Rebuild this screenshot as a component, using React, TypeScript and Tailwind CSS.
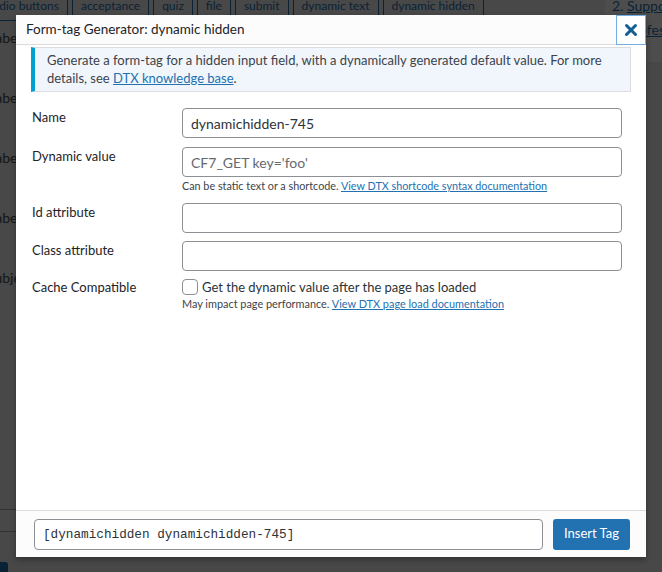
import { X } from "lucide-react";

const tags = ["radio buttons", "acceptance", "quiz", "file", "submit", "dynamic text", "dynamic hidden"];

function Background() {
  return (
    <div className="absolute inset-0 overflow-hidden bg-[#484848]">
      {/* tag button bar */}
      <div className="flex items-start h-[62px]">
        <div className="flex gap-[4px] -ml-[20px] -mt-[6px]">
          {tags.map((t) => (
            <div
              key={t}
              className="h-[27px] px-[8px] border border-[#0a2235] text-[12px] leading-[22px] text-[#0a2235] whitespace-nowrap"
            >
              {t}
            </div>
          ))}
        </div>
        <div className="ml-auto w-[57px] h-[62px] bg-[#4d4d4d] pl-[7px] text-[14px] leading-[24px] text-[#0a2235] whitespace-nowrap overflow-hidden">
          <div className="-mt-[6px]">
            2. <span className="underline">Support</span>
          </div>
          <div className="pl-[14px] underline">Professional</div>
        </div>
      </div>
      {/* left column labels */}
      <div className="flex flex-col gap-[42px] -ml-[12px] -mt-[33px] text-[14px] leading-[18px] text-[#141618]">
        <div>Label</div>
        <div>Label</div>
        <div>Label</div>
        <div>Label</div>
        <div className="-ml-[1px]">Subject</div>
      </div>
      <div className="mt-[222px] w-[16px] border-t border-[#333333]" />
      <div className="mt-[21px] w-[16px] border-t border-[#333333]" />
      <div className="mt-[30px] w-[8px] h-[12px] rounded-tr-[3px] bg-[#0a2235]" />
    </div>
  );
}

function Row({ label, children }: { label: string; children: React.ReactNode }) {
  return (
    <div className="flex">
      <div className="w-[150px] shrink-0 text-[13px] leading-[18px] text-[#1d2327]">{label}</div>
      <div className="flex-1">{children}</div>
    </div>
  );
}

const inputCls =
  "block w-full h-[30px] px-[8px] border border-[#8c8f94] rounded-[4px] bg-white text-[14px] text-[#2c3338] outline-none";

export default function App() {
  return (
    <div
      className="relative w-[662px] h-[572px] overflow-hidden"
      style={{ fontFamily: 'Lato, "Noto Sans", sans-serif' }}
    >
      <Background />

      {/* modal */}
      <div className="absolute left-[16px] top-[15px] w-[630px] h-[542px] bg-white shadow-[0_3px_6px_rgba(0,0,0,0.3)] flex flex-col">
        <div className="relative h-[30px] shrink-0 border-b border-[#dcdcde] bg-[#fcfcfc] pl-[10px] flex items-center">
          <h1 className="text-[13.5px] text-[#1d2327]">Form-tag Generator: dynamic hidden</h1>
          <button className="absolute right-0 top-0 w-[30px] h-[30px] border border-[#72aee6] bg-white flex items-center justify-center">
            <X className="w-[18px] h-[18px] text-[#135e96]" strokeWidth={4} />
          </button>
        </div>

        <div className="mx-[15px] mt-[2px] border border-[#dcdcde] border-l-4 border-l-[#00a0d2] bg-[#f0f6fc] pl-[12px] pr-[10px] pt-[4px] pb-[4px] text-[13px] leading-[17.5px] text-[#3c434a]">
          Generate a form-tag for a hidden input field, with a dynamically generated default value. For more
          details, see <span className="text-[#2271b1] underline">DTX knowledge base</span>.
        </div>

        <div className="flex-1 pl-[16px] pr-[24px] pt-[16px] flex flex-col">
          <Row label="Name">
            <input className={inputCls} defaultValue="dynamichidden-745" />
          </Row>
          <div className="mt-[9px]">
            <Row label="Dynamic value">
              <input className={`${inputCls} placeholder:text-[#646970]`} placeholder="CF7_GET key='foo'" />
              <p className="mt-[2px] text-[10.8px] leading-[14px] text-[#3c434a]">
                Can be static text or a shortcode.{" "}
                <span className="text-[#2271b1] underline">View DTX shortcode syntax documentation</span>
              </p>
            </Row>
          </div>
          <div className="mt-[10px]">
            <Row label="Id attribute">
              <input className={inputCls} />
            </Row>
          </div>
          <div className="mt-[8px]">
            <Row label="Class attribute">
              <input className={inputCls} />
            </Row>
          </div>
          <div className="mt-[7px]">
            <Row label="Cache Compatible">
              <label className="flex items-center gap-[4px] text-[13px] leading-[18px] text-[#2c3338]">
                <span className="w-[16px] h-[16px] border border-[#8c8f94] rounded-[4px] bg-white shrink-0" />
                Get the dynamic value after the page has loaded
              </label>
              <p className="mt-[1px] text-[10.9px] leading-[14px] text-[#3c434a]">
                May impact page performance.{" "}
                <span className="text-[#2271b1] underline">View DTX page load documentation</span>
              </p>
            </Row>
          </div>
        </div>

        <div className="h-[47px] shrink-0 border-t border-[#dcdcde] bg-[#fcfcfc] pl-[18px] pr-[16px] flex items-center gap-[10px]">
          <input
            className="flex-1 h-[31px] px-[8px] border border-[#8c8f94] rounded-[4px] bg-white text-[12.7px] text-[#2c3338] outline-none"
            style={{ fontFamily: '"Liberation Mono", "DejaVu Sans Mono", monospace' }}
            defaultValue="[dynamichidden dynamichidden-745]"
            readOnly
          />
          <button className="w-[77px] h-[31px] rounded-[3px] bg-[#2271b1] text-white text-[13px]">Insert Tag</button>
        </div>
      </div>
    </div>
  );
}
